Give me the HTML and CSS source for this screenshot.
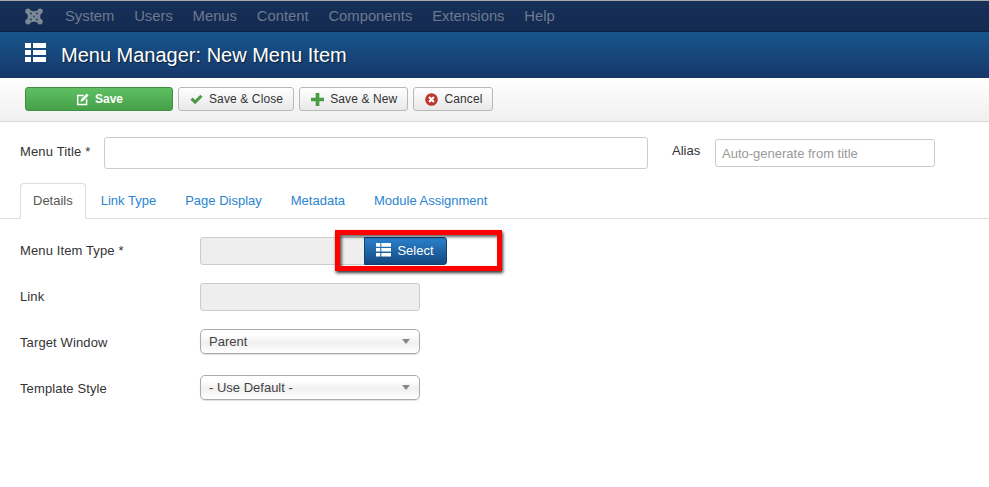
FILE: index.html
```html
<!DOCTYPE html>
<html lang="en">
<head>
<meta charset="utf-8">
<title>Menu Manager: New Menu Item</title>
<link rel="stylesheet" href="styles.css">
</head>
<body>
<nav class="navbar">
  <svg class="joomla" viewBox="0 0 18 17" width="18" height="17" aria-hidden="true">
    <path fill="#7c8896" d="M3 0.5c1.4 0 2.3.9 2.6 2 2.2 1 4.6 1 6.8 0 .3-1.1 1.2-2 2.6-2 1.7 0 2.8 1.2 2.8 2.8 0 1.3-.8 2.3-2 2.6-.8 1.7-.8 3.5 0 5.2 1.2.3 2 1.3 2 2.6 0 1.6-1.1 2.8-2.8 2.8-1.4 0-2.3-.9-2.6-2-2.2-1-4.6-1-6.8 0-.3 1.1-1.2 2-2.6 2C1.3 16.5.2 15.3.2 13.700c0-1.300.8-2.300 2-2.600.8-1.700.8-3.500 0-5.200C1 5.600.2 4.600.2 3.300.2 1.700 1.300.5 3 .5z"/>
    <g fill="#2c4468">
      <circle cx="6" cy="5.500" r="1.100"/><circle cx="12" cy="5.500" r="1.100"/>
      <circle cx="6" cy="11.500" r="1.100"/><circle cx="12" cy="11.500" r="1.100"/>
      <circle cx="9" cy="8.500" r=".9"/>
    </g>
  </svg>
  <ul class="nav-list">
    <li>System</li><li>Users</li><li>Menus</li><li>Content</li><li>Components</li><li>Extensions</li><li>Help</li>
  </ul>
</nav>
<header class="page-title">
  <svg class="title-icon" viewBox="0 0 21 20" width="21" height="20" aria-hidden="true">
    <path fill="#fff" d="M0 0h6v5H0zM8 0h13v5H8zM0 7h6v5H0zM8 7h13v5H8zM0 14h6v5H0zM8 14h13v5H8z"/>
  </svg>
  <h1>Menu Manager: New Menu Item</h1>
</header>
<div class="toolbar">
  <button class="btn btn-save" type="button">
    <svg viewBox="0 0 14 14" width="13" height="13" aria-hidden="true"><path fill="#fff" d="M1 2H9L7.4 3.6H2.6v8h8V7.4L12.2 5.8v7.4H1zM11.6.6 13.6 2.6 7.4 8.8 4.8 9.4 5.400 6.800z"/></svg>
    Save
  </button>
  <button class="btn" type="button">
    <svg viewBox="0 0 14 14" width="13" height="13" aria-hidden="true"><path fill="#4a9a46" d="M0.5 7.2 2.8 4.9 5.5 7.6 11.2 1.8 13.5 4.1 5.5 12.2z"/></svg>
    Save &amp; Close
  </button>
  <button class="btn" type="button">
    <svg viewBox="0 0 14 14" width="13" height="13" aria-hidden="true"><path fill="#4a9a46" d="M5 0h4v5h5v4H9v5H5V9H0V5h5z"/></svg>
    Save &amp; New
  </button>
  <button class="btn" type="button">
    <svg viewBox="0 0 14 14" width="13" height="13" aria-hidden="true"><circle cx="7" cy="7" r="6.8" fill="#bd362f"/><path stroke="#fff" stroke-width="2.4" d="M4.4 4.4l5.2 5.2M9.6 4.4l-5.2 5.2"/></svg>
    Cancel
  </button>
</div>
<main class="content">
  <div class="title-row">
    <label class="title-label">Menu Title *</label>
    <input class="input input-title" type="text">
    <label class="alias-label">Alias</label>
    <input class="input input-alias" type="text" placeholder="Auto-generate from title">
  </div>
  <ul class="tabs">
    <li class="tab active">Details</li>
    <li class="tab">Link Type</li>
    <li class="tab">Page Display</li>
    <li class="tab">Metadata</li>
    <li class="tab">Module Assignment</li>
  </ul>
  <div class="form">
    <div class="row">
      <label class="row-label">Menu Item Type *</label>
      <div class="type-field">
        <input class="input input-short" type="text" disabled>
        <button class="btn-select" type="button">
          <svg viewBox="0 0 14 13" width="15" height="14" aria-hidden="true"><path fill="#fff" d="M0 0h4v3.4H0zM5 0h9v3.4H5zM0 4.6h4V8H0zM5 4.6h9V8H5zM0 9.2h4v3.4H0zM5 9.2h9v3.4H5z"/></svg>
          Select
        </button>
      </div>
    </div>
    <div class="row">
      <label class="row-label">Link</label>
      <input class="input input-wide" type="text" disabled>
    </div>
    <div class="row">
      <label class="row-label">Target Window</label>
      <div class="select">Parent<span class="caret"></span></div>
    </div>
    <div class="row">
      <label class="row-label">Template Style</label>
      <div class="select">- Use Default -<span class="caret"></span></div>
    </div>
  </div>
  <div class="highlight"></div>
</main>
</body>
</html>
```
FILE: styles.css
```css
* { box-sizing: border-box; }
html, body { margin: 0; padding: 0; }
body {
  width: 989px;
  height: 487px;
  overflow: hidden;
  background: #fff;
  font-family: "Liberation Sans", Arial, sans-serif;
  font-size: 13px;
  color: #333;
}
.navbar {
  height: 32px;
  display: flex;
  align-items: center;
  padding-left: 25px;
  background: linear-gradient(#17305a, #132a50);
  border-top: 1px solid #a8a8a8;
  border-bottom: 1px solid #0c2140;
}
.joomla { flex: none; }
.nav-list {
  display: flex;
  gap: 19.8px;
  list-style: none;
  margin: 0 0 0 22px;
  padding: 0;
  color: #6d7a8d;
  font-size: 14.8px;
}
.page-title {
  height: 46px;
  display: flex;
  align-items: center;
  padding-left: 25px;
  background: linear-gradient(#17568c, #17376a);
  color: #fff;
}
.title-icon { flex: none; margin-top: -4px; }
.page-title h1 {
  margin: 0 0 0 15px;
  font-size: 20px;
  font-weight: 400;
  line-height: 1;
  text-shadow: 1px 1px 1px rgba(0, 0, 0, .5);
}
.toolbar {
  height: 44px;
  display: flex;
  gap: 5px;
  padding: 9px 0 0 25px;
  background: linear-gradient(#fff, #f0f0f0);
  border-bottom: 1px solid #d8d8d8;
}
.btn {
  height: 24px;
  padding: 0 10px 0 11px;
  display: flex;
  align-items: center;
  gap: 6px;
  font: 12px "Liberation Sans", Arial, sans-serif;
  letter-spacing: .12px;
  color: #333;
  background: linear-gradient(#fff, #e8e8e8);
  border: 1px solid #b8b8b8;
  border-radius: 3px;
}
.btn-save {
  width: 148px;
  justify-content: center;
  color: #fff;
  font-weight: 700;
  letter-spacing: 0;
  background: linear-gradient(#5fbe62, #46a149);
  border-color: #3f8f42;
}
.content { position: relative; padding: 15px 0 0 20px; }
.title-row { display: flex; align-items: flex-start; height: 32px; }
.title-label { width: 84px; line-height: 29px; letter-spacing: .15px; }
.alias-label { margin-left: 24px; width: 43px; line-height: 28px; }
.input {
  height: 28px;
  border: 1px solid #ccc;
  border-radius: 3px;
  background: #fff;
  padding: 0 6px;
  font: 13px "Liberation Sans", Arial, sans-serif;
}
.input::placeholder { color: #999; opacity: 1; }
.input-title { width: 544px; height: 32px; }
.input-alias { width: 220px; margin-top: 2px; }
.input[disabled] { background: #eee; }
.input-short { width: 220px; }
.input-wide { width: 220px; }
.tabs {
  display: flex;
  list-style: none;
  margin: 14px 0 0 -20px;
  padding: 0 0 0 20px;
  height: 36px;
  border-bottom: 1px solid #ddd;
  color: #2a85d0;
}
.tab {
  height: 36px;
  padding: 0 14.5px;
  line-height: 35px;
}
.tab.active {
  padding: 0 12px;
  line-height: 34px;
  color: #555;
  background: #fff;
  border: 1px solid #ddd;
  border-bottom-color: #fff;
  border-radius: 4px 4px 0 0;
  margin-right: .5px;
}
.form {
  display: flex;
  flex-direction: column;
  gap: 18px;
  padding-top: 18px;
}
.row { display: flex; align-items: flex-start; height: 28px; }
.row-label { width: 180px; line-height: 28px; letter-spacing: .12px; }
.type-field { display: flex; }
.btn-select {
  margin-left: -56px;
  position: relative;
  width: 83px;
  height: 28px;
  display: flex;
  align-items: center;
  justify-content: center;
  gap: 6px;
  padding: 0 1px 2px 0;
  border: 1px solid #12406f;
  border-radius: 0 3px 3px 0;
  background: linear-gradient(#2a81cc, #14497f);
  color: #fff;
  font: 13px "Liberation Sans", Arial, sans-serif;
}
.select {
  position: relative;
  width: 220px;
  height: 25px;
  line-height: 23px;
  padding-left: 8px;
  border: 1px solid #aaa;
  border-radius: 5px;
  background: linear-gradient(#fff 20%, #f0f0f0 55%, #fff);
  box-shadow: 0 1px 1px rgba(0, 0, 0, .12);
  color: #444;
  font-size: 13px;
}
.caret {
  position: absolute;
  right: 9px;
  top: 9px;
  border: 4px solid transparent;
  border-top: 5px solid #888;
  border-bottom: 0;
}
.highlight {
  position: absolute;
  left: 335px;
  top: 108px;
  width: 167px;
  height: 41px;
  border: 5px solid #f00;
  box-shadow: 1px 2px 3px rgba(0, 0, 0, .8), inset 2px 2px 3px rgba(0, 0, 0, .6);
}
```
